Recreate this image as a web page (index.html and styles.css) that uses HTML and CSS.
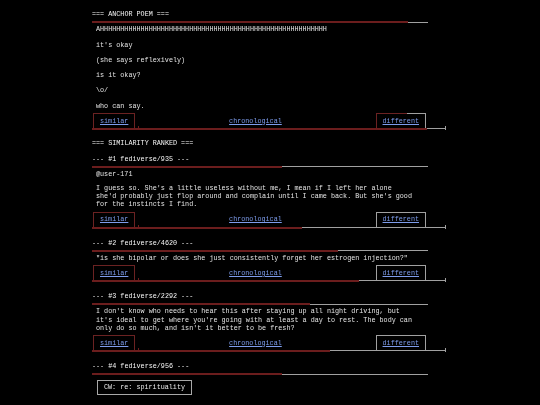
FILE: index.html
```html
<!DOCTYPE html>
<html lang="en">
<head>
  <meta charset="UTF-8">
  <title>anchor poem</title>
  <link rel="stylesheet" href="styles.css">
</head>
<body>
  <main class="page">

    <section class="block">
      <h2 class="title">=== ANCHOR POEM ===</h2>
      <div class="bar"><span class="fill" style="width:94%"></span></div>
      <div class="body">
        <p>AHHHHHHHHHHHHHHHHHHHHHHHHHHHHHHHHHHHHHHHHHHHHHHHHHHHHHHHH</p>
        <p>it's okay</p>
        <p>(she says reflexively)</p>
        <p>is it okay?</p>
        <p>\o/</p>
        <p>who can say.</p>
      </div>
      <nav class="links">
        <a href="#" class="box red">similar</a>
        <a href="#">chronological</a>
        <a href="#" class="box split">different</a>
      </nav>
      <div class="bar wide"><span class="fill" style="width:94.6%"></span></div>
    </section>

    <h2 class="title section-title">=== SIMILARITY RANKED ===</h2>

    <section class="block">
      <h3 class="title">--- #1 fediverse/935 ---</h3>
      <div class="bar"><span class="fill" style="width:56.5%"></span></div>
      <div class="body">
        <div class="user">@user-171</div>
        <p>I guess so. She's a little useless without me, I mean if I left her alone she'd probably just flop around and complain until I came back. But she's good for the instincts I find.</p>
      </div>
      <nav class="links">
        <a href="#" class="box red">similar</a>
        <a href="#">chronological</a>
        <a href="#" class="box grey">different</a>
      </nav>
      <div class="bar wide"><span class="fill" style="width:59.3%"></span></div>
    </section>

    <section class="block">
      <h3 class="title">--- #2 fediverse/4620 ---</h3>
      <div class="bar"><span class="fill" style="width:73.2%"></span></div>
      <div class="body">
        <p>"is she bipolar or does she just consistently forget her estrogen injection?"</p>
      </div>
      <nav class="links">
        <a href="#" class="box red">similar</a>
        <a href="#">chronological</a>
        <a href="#" class="box grey">different</a>
      </nav>
      <div class="bar wide"><span class="fill" style="width:75.4%"></span></div>
    </section>

    <section class="block">
      <h3 class="title">--- #3 fediverse/2292 ---</h3>
      <div class="bar"><span class="fill" style="width:64.9%"></span></div>
      <div class="body">
        <p>I don't know who needs to hear this after staying up all night driving, but it's ideal to get where you're going with at least a day to rest. The body can only do so much, and isn't it better to be fresh?</p>
      </div>
      <nav class="links">
        <a href="#" class="box red">similar</a>
        <a href="#">chronological</a>
        <a href="#" class="box grey">different</a>
      </nav>
      <div class="bar wide"><span class="fill" style="width:67.2%"></span></div>
    </section>

    <section class="block">
      <h3 class="title">--- #4 fediverse/956 ---</h3>
      <div class="bar"><span class="fill" style="width:56.5%"></span></div>
      <div class="body">
        <span class="cw">CW: re: spirituality</span>
      </div>
    </section>

  </main>
</body>
</html>
```

FILE: styles.css
```css
body {
  margin: 0;
  background-color: #000;
  color: #e4e4e4;
  font-family: "Liberation Mono", "DejaVu Sans Mono", monospace;
  font-size: 6.75px;
  line-height: 8.3px;
}

.page {
  width: 336px;
  padding: 10px 20px 0 0;
  margin: 0 auto;
  will-change: transform; /* grey text antialiasing */
}

.title {
  margin: 0;
  font-size: inherit;
  font-weight: normal;
  color: #f6f6f6;
}

.section-title {
  margin: -1px 0 7.5px;
}

.block {
  margin-bottom: 10px;
}

/* similarity bar: grey rail, red fill */
.bar {
  position: relative;
  height: 2px;
  margin-top: 3px;
  background: linear-gradient(#a0a0a0, #a0a0a0) 0 50% / 100% 1px no-repeat;
}

.fill {
  display: block;
  height: 2px;
  background-color: #6b1d1d;
}

.bar.wide {
  margin-top: 0;
  margin-right: -18px;
}

.bar.wide::before,
.bar.wide::after {
  content: "";
  position: absolute;
  bottom: 0;
  width: 1px;
  height: 4px;
}

.bar.wide::before {
  left: 46px;
  background-color: #6b1d1d;
}

.bar.wide::after {
  right: 0;
  background-color: #a0a0a0;
}

.body {
  padding: 2px 14px 3px 4px;
}

.body p {
  margin: 0 0 7px;
  max-width: 78.5ch;
}

.body p:last-child {
  margin-bottom: 0;
}

.user {
  margin-bottom: 5.6px;
}

.links {
  display: flex;
  justify-content: space-between;
  align-items: flex-end;
  padding: 0 2px 0 1px;
}

.links a {
  padding: 2.5px 6px 3px;
  border: 1px solid transparent;
  border-bottom: none;
  color: #7d9cec;
  text-decoration: underline;
}

.links .red {
  border-color: #6b2222;
}

.links .grey {
  border-color: #a0a0a0;
}

.links .split {
  border-image: linear-gradient(to right, #6b2222 63%, #a0a0a0 63%) 1;
}

.cw {
  display: inline-block;
  margin: 2.7px 0 0 1px;
  padding: 2.5px 6px;
  border: 1px solid #a8a8a8;
  color: #ececec;
}
```
